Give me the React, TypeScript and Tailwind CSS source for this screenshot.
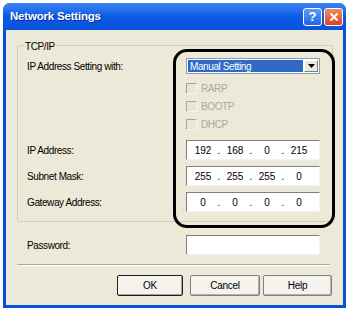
const font = { fontFamily: '"Liberation Sans", Arial, sans-serif' };

const IpField = ({ parts }: { parts: string[] }) => (
  <div className="flex h-[20px] w-[134px] items-center border border-t-[#808080] border-l-[#808080] border-b-[#f4f3ee] border-r-[#f4f3ee] bg-white pl-[3px] text-[10px] text-black">
    {parts.map((p, i) => (
      <div key={i} className="flex items-center">
        <span className="w-[26px] text-center">{p}</span>
        {i < 3 && <span className="w-[6px] text-center">.</span>}
      </div>
    ))}
  </div>
);

const Check = ({ label }: { label: string }) => (
  <div className="flex h-[18px] items-center gap-[4px]">
    <div className="h-[11px] w-[11px] border border-t-[#a8a698] border-l-[#a8a698] border-b-[#f7f6f0] border-r-[#f7f6f0] bg-[#e8e6d6]" />
    <span className="text-[10px] tracking-[-0.4px] text-[#aca899]">{label}</span>
  </div>
);

const Label = ({ children }: { children: string }) => (
  <span className="text-[10px] tracking-[-0.4px] text-black">{children}</span>
);

export default function App() {
  return (
    <div className="h-[311px] w-[350px] bg-white pl-[3px] pt-[3px]" style={font}>
      <div className="flex h-[305px] w-[343px] flex-col rounded-t-[7px] bg-[#0a4fd8]">
        {/* title bar */}
        <div className="flex h-[27px] items-center justify-between rounded-t-[7px] bg-gradient-to-b from-[#3d86f5] via-[#0a5ae6] to-[#0b52dc] pl-[7px] pr-[3px]">
          <span className="text-[11.5px] font-bold tracking-[-0.2px] text-white [text-shadow:1px_1px_0_#0a2a8a]">Network Settings</span>
          <div className="flex gap-[2px]">
            <div className="flex h-[18px] w-[19px] items-center justify-center rounded-[3px] border border-white bg-gradient-to-b from-[#5b9bff] to-[#2363e0] text-[13px] font-bold leading-none text-white">?</div>
            <div className="flex h-[18px] w-[19px] items-center justify-center rounded-[3px] border border-white bg-gradient-to-b from-[#f08a6a] to-[#d8401c]">
              <svg width="10" height="10" viewBox="0 0 10 10">
                <path d="M1.5 1.5 L8.5 8.5 M8.5 1.5 L1.5 8.5" stroke="white" strokeWidth="2" />
              </svg>
            </div>
          </div>
        </div>

        {/* body */}
        <div className="relative mx-[3px] mb-[3px] flex flex-1 flex-col bg-[#ece9d8] pl-[11px] pt-[15px]">
          {/* TCP/IP group */}
          <div className="relative h-[177px] w-[316px] rounded-[2px] border border-[#d0d0bf] pl-[9px] pt-[12px]">
            <span className="absolute -top-[7px] left-[6px] bg-[#ece9d8] px-[1px] text-[10px] tracking-[-0.4px] text-black">TCP/IP</span>
            <div className="grid grid-cols-[159px_134px] items-center">
              <Label>IP Address Setting with:</Label>
              <div className="flex h-[16px] w-[134px] items-center border border-[#7f9db9] bg-white p-[1px]">
                <div className="flex h-full flex-1 items-center bg-[#316ac5] pl-[2px] text-[10px] tracking-[-0.4px] text-white">Manual Setting</div>
                <div className="ml-[1px] flex h-full w-[14px] items-center justify-center border border-t-white border-l-white border-b-[#808080] border-r-[#808080] bg-[#ece9d8]">
                  <svg width="7" height="4" viewBox="0 0 7 4"><path d="M0 0 H7 L3.5 4 Z" fill="black" /></svg>
                </div>
              </div>
            </div>
            <div className="ml-[159px] mt-[5px] flex flex-col">
              <Check label="RARP" />
              <Check label="BOOTP" />
              <Check label="DHCP" />
            </div>
            <div className="mt-[7px] flex flex-col gap-[6px]">
              <div className="grid grid-cols-[159px_134px] items-center">
                <Label>IP Address:</Label>
                <IpField parts={["192", "168", "0", "215"]} />
              </div>
              <div className="grid grid-cols-[159px_134px] items-center">
                <Label>Subnet Mask:</Label>
                <IpField parts={["255", "255", "255", "0"]} />
              </div>
              <div className="grid grid-cols-[159px_134px] items-center">
                <Label>Gateway Address:</Label>
                <IpField parts={["0", "0", "0", "0"]} />
              </div>
            </div>
          </div>

          {/* password */}
          <div className="mt-[13px] grid grid-cols-[159px_134px] items-center pl-[10px]">
            <Label>Password:</Label>
            <div className="h-[20px] w-[134px] border border-t-[#808080] border-l-[#808080] border-b-[#f4f3ee] border-r-[#f4f3ee] bg-white" />
          </div>

          <div className="mt-[9px] h-[2px] w-[313px] border-t border-b border-t-[#aca899] border-b-white" />

          <div className="mt-[9px] flex h-[21px] text-[10px] tracking-[-0.3px] text-black">
            <button className="ml-[100px] w-[66px] rounded-[2px] border border-[#202020] bg-[#f4f3ee] shadow-[inset_-1px_-1px_0_#a0a0a0]">OK</button>
            <button className="ml-[7px] w-[70px] rounded-[2px] border border-[#808080] bg-[#f4f3ee] shadow-[inset_-1px_-1px_0_#b0b0b0]">Cancel</button>
            <button className="ml-[3px] w-[69px] rounded-[2px] border border-[#808080] bg-[#f4f3ee] shadow-[inset_-1px_-1px_0_#b0b0b0]">Help</button>
          </div>

          {/* highlight annotation */}
          <div className="absolute left-[167px] top-[19px] h-[179px] w-[162px] rounded-[14px] border-[3px] border-black" />
        </div>
      </div>
    </div>
  );
}
